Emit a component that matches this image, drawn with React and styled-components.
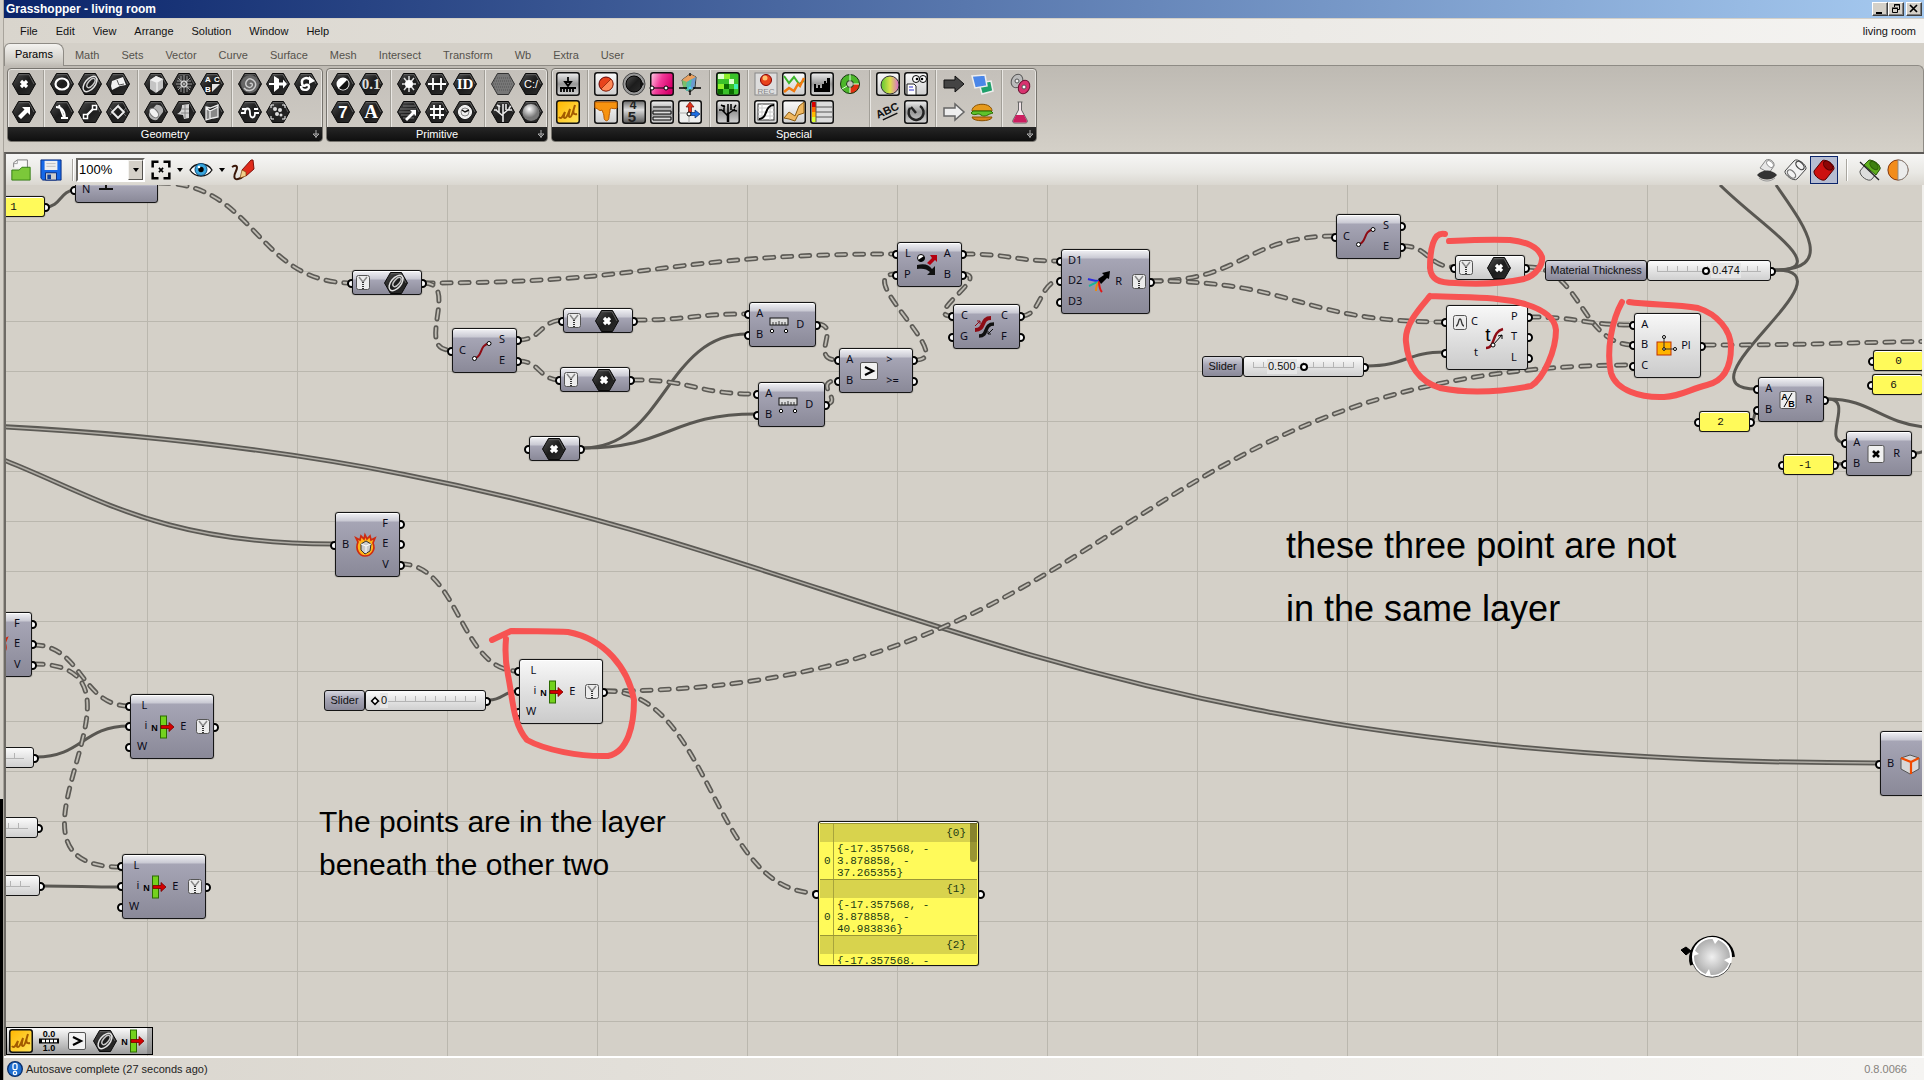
import React from "react";
import styled, { createGlobalStyle, css } from "styled-components";

const UI = '"Liberation Sans", Arial, sans-serif';
const MONO = '"Liberation Mono", "Courier New", monospace';
const ORIGIN = { x: 6, y: 185 };

const GlobalStyle = createGlobalStyle`
  *, *::before, *::after { box-sizing: border-box; }
  body { margin: 0; background: #d4d0c8; font: 11px/14px ${UI}; color: #111; }
  button { font: inherit; color: inherit; background: none; border: 0; padding: 0; margin: 0; }
`;

/* ---------- window frame ---------- */

const Screen = styled.div`
  display: flex;
  height: 100vh;
  overflow: hidden;
`;
const Backdrop = styled.div`
  flex: none;
  width: 4px;
  background: linear-gradient(#d4d0c8 0 74%, #000 74%);
  border-right: 1px solid #a8a49c;
`;
const Window = styled.div`
  flex: 1;
  min-width: 0;
  display: flex;
  flex-direction: column;
`;
const TitleBar = styled.header`
  height: 18px;
  display: flex;
  align-items: center;
  padding: 0 2px;
  background: linear-gradient(90deg, #0a246a, #a6caf0);
  h1 { flex: 1; margin: 0; font-size: 12px; line-height: 18px; font-weight: bold; color: #fff; }
`;
const CaptionButton = styled.button`
  width: 16px;
  height: 14px;
  margin-left: ${(p) => (p.$apart ? 2 : 0)}px;
  background: #d4d0c8;
  border: 1px solid;
  border-color: #fff #404040 #404040 #fff;
  box-shadow: inset -1px -1px #808080;
  svg { display: block; width: 14px; height: 12px; }
`;
const MenuBar = styled.nav`
  height: 25px;
  display: flex;
  align-items: center;
  padding: 0 8px 0 7px;
  background: linear-gradient(90deg, #d9d5cd, #f5f4f2);
  border-top: 1px solid #d4d0c8;
`;
const MenuItem = styled.button`
  padding: 0 9px;
  font-size: 11px;
`;
const DocName = styled.span`
  margin-left: auto;
`;
const Tabs = styled.div`
  height: 22px;
  display: flex;
  align-items: stretch;
  background: #d4d0c8;
`;
const Tab = styled.button`
  padding: 2px 11px 0;
  color: #55524c;
  ${(p) =>
    p.$active &&
    css`
      color: #000;
      padding: 0 10px 2px;
      margin-bottom: -1px;
      border: 1px solid #8e8b85;
      border-bottom: 0;
      border-radius: 6px 8px 0 0;
      background: linear-gradient(#f4f3f0, #cfccc5 80%, #bfbbb4);
      z-index: 1;
    `}
`;
const Ribbon = styled.div`
  height: 87px;
  display: flex;
  align-items: flex-start;
  gap: 3px;
  padding: 2px 3px;
  border-top: 1px solid #8e8b85;
  border-right: 1px solid #8e8b85;
  border-radius: 0 6px 0 0;
  background: linear-gradient(#bebab3, #d4d0c8);
`;
const Group = styled.section`
  border: 1px solid #77746e;
  border-radius: 4px;
  background: linear-gradient(#c4c0ba, #cfcbc4);
  box-shadow: inset 0 0 0 1px #e6e4e0;
  overflow: hidden;
`;
const GroupBody = styled.div`
  height: 58px;
  display: flex;
  padding: 1px 2px 0;
`;
const GroupTitle = styled.button`
  position: relative;
  display: block;
  width: 100%;
  height: 14px;
  line-height: 13px;
  color: #fff;
  text-align: center;
  background: linear-gradient(#262626, #0f0f0f);
  svg { position: absolute; right: 2px; top: 3px; }
`;
const Cells = styled.div`
  display: grid;
  grid-auto-flow: column;
  grid-template-rows: 28px 28px;
  grid-auto-columns: 28px;
  & + & {
    margin-left: 5px;
    padding-left: 4px;
    border-left: 1px solid #a29f98;
    box-shadow: inset 1px 0 #e9e7e3;
  }
`;
const ToolButton = styled.button`
  display: grid;
  place-items: center;
`;
const Svg = styled.svg`
  display: block;
  flex: none;
  overflow: visible;
`;

const CanvasBar = styled.div`
  height: 33px;
  display: flex;
  align-items: center;
  padding: 0 12px 0 3px;
  border-top: 2px solid #5c5a57;
  border-left: 2px solid #6e6b66;
  background: linear-gradient(#f6f6f5, #e9e8e4 60%, #dad7d0);
`;
const BarButton = styled.button`
  display: grid;
  place-items: center;
  width: ${(p) => p.$w || 28}px;
  height: 28px;
  border: 1px solid ${(p) => (p.$on ? "#0a246a" : "transparent")};
  background: ${(p) => (p.$on ? "#b6bdd2" : "none")};
`;
const BarRule = styled.span`
  width: 2px;
  height: 22px;
  margin: 0 ${(p) => p.$m}px;
  border-left: 1px solid #a9a69f;
  background: #fff;
`;
const ZoomBox = styled.label`
  display: flex;
  height: 24px;
  width: 69px;
  border: 2px solid;
  border-color: #6a6864 #fff #fff #6a6864;
  background: #fff;
`;
const ZoomSelect = styled.select`
  flex: 1;
  min-width: 0;
  appearance: none;
  border: 0;
  padding: 0 0 0 1px;
  background: #fff;
  font: 13px/20px ${UI};
  color: #000;
`;
const ZoomArrow = styled.span`
  width: 15px;
  display: grid;
  place-items: center;
  background: #d4d0c8;
  border: 1px solid;
  border-color: #f4f3f0 #55534f #55534f #f4f3f0;
`;
const Push = styled.span`
  flex: 1;
`;
const StatusBar = styled.footer`
  height: 24px;
  display: flex;
  align-items: center;
  gap: 3px;
  padding: 0 17px 0 3px;
  border-top: 2px solid #fff;
  background: linear-gradient(90deg, #d9d5cd, #f5f4f2);
  color: #222;
`;
const Version = styled.span`
  margin-left: auto;
  color: #85827d;
`;

/* ---------- canvas ---------- */

const Canvas = styled.main`
  position: relative;
  flex: 1;
  min-height: 0;
  overflow: hidden;
  border-left: 2px solid #6e6b66;
  border-right: 2px solid #f0efec;
  background-color: #d4d0c8;
  background-image: linear-gradient(90deg, #bab7ae 1px, transparent 1px),
    linear-gradient(#bab7ae 1px, transparent 1px);
  background-size: 150px 50px;
  background-position: 141px 36px;
`;
const Sheet = styled.svg`
  position: absolute;
  inset: 0;
  width: 100%;
  height: 100%;
  pointer-events: none;
`;
const Placed = styled.div`
  position: absolute;
  left: ${(p) => p.$x - ORIGIN.x}px;
  top: ${(p) => p.$y - ORIGIN.y}px;
  width: ${(p) => p.$w}px;
  height: ${(p) => p.$h}px;
  isolation: isolate;
`;
const skins = {
  grey: "linear-gradient(#f2f2f5 0, #c9c9d3 8px, #a6a5b5 9px, #8a8998 100%)",
  light: "linear-gradient(#f8f8f8, #dedede 55%, #cbcbcb)",
  yellow: "#fffa5a",
};
const Body = styled.div`
  height: 100%;
  display: flex;
  align-items: stretch;
  border: 1px solid #151515;
  border-radius: 3px;
  background: ${(p) => skins[p.$skin]};
  box-shadow: inset 0 1px #fff, 0 0 1px #333;
`;
const Ports = styled.div`
  display: flex;
  flex-direction: column;
  padding: 1px 0;
  ${(p) => p.$grow && "flex: 1;"}
`;
const Port = styled.div`
  position: relative;
  flex: 1;
  display: flex;
  align-items: center;
  gap: 4px;
  justify-content: ${(p) => (p.$side === "in" ? "flex-end" : "flex-start")};
  padding: ${(p) => (p.$side === "in" ? "0 0 0 6px" : "0")};
  white-space: nowrap;
`;
const PortName = styled.span`
  padding-bottom: 2px;
  font: 11px/16px "Noto Sans", "Open Sans", sans-serif;
  color: #0c0c1a;
`;
const Grip = styled.i`
  position: absolute;
  z-index: -1;
  top: 50%;
  margin-top: -4px;
  ${(p) => (p.$side === "in" ? "left: -6px;" : "right: -6px;")}
  width: 9px;
  height: 9px;
  border: 2px solid #000;
  border-radius: 50%;
  background: #fff;
`;
const IconSlot = styled.div`
  display: grid;
  place-items: center;
  width: 24px;
  margin: 0 5px 0 4px;
`;
const ZipSlot = styled.div`
  display: grid;
  place-items: center;
  width: 14px;
  margin-left: ${(p) => (p.$end ? "auto" : 0)};
  margin-right: ${(p) => (p.$end ? 3 : 0)}px;
`;
const ParamRow = styled.div`
  position: relative;
  flex: 1;
  display: flex;
  align-items: center;
  justify-content: space-between;
  padding: 0 13px 0 3px;
`;
const Hexed = styled.span`
  margin-left: auto;
`;
const SmallPanel = styled.div`
  position: relative;
  flex: 1;
  display: flex;
  align-items: center;
  justify-content: center;
  padding-right: ${(p) => p.$shift || 0}px;
  font: 11px/14px ${MONO};
`;
const SliderTag = styled.label`
  flex: none;
  width: ${(p) => p.$w}px;
  height: 100%;
  border: 1px solid #151515;
  border-radius: 3px;
  text-align: center;
  line-height: 18px;
  background: linear-gradient(#d6d6de, #a6a5b5 8px, #8a8998);
`;
const SliderBody = styled.div`
  position: relative;
  flex: 1;
  height: 100%;
  padding: 0 5px;
  border: 1px solid #151515;
  border-radius: 3px;
  background: linear-gradient(#fbfbfb, #e4e4e4 50%, #d0d0d0);
`;
const SliderRow = styled.div`
  height: 100%;
  display: flex;
`;
const Range = styled.input`
  appearance: none;
  display: block;
  width: 100%;
  height: 19px;
  margin: 0;
  background:
    linear-gradient(#b4b4b4, #b4b4b4) 4px 10px / calc(100% - 8px) 1px no-repeat,
    repeating-linear-gradient(90deg, #b4b4b4 0 1px, transparent 1px 10px) 4px 5px / calc(100% - 8px) 5px no-repeat;
  &::-webkit-slider-thumb {
    appearance: none;
    width: 8px;
    height: 8px;
    margin-top: 1px;
    border: 2px solid #000;
    border-radius: ${(p) => (p.$diamond ? 0 : "50%")};
    background: #fff;
    transform: ${(p) => (p.$diamond ? "rotate(45deg) scale(0.8)" : "none")};
  }
`;
const Value = styled.output`
  position: absolute;
  top: 2px;
  ${(p) => (p.$before ? "right: calc(50% + 7px);" : "")}
  font-size: 11px;
  line-height: 15px;
  padding: 0 1px;
  background: #e6e6e6;
`;
const Note = styled.p`
  position: absolute;
  left: ${(p) => p.$x - ORIGIN.x}px;
  top: ${(p) => p.$y - ORIGIN.y}px;
  margin: 0;
  font: ${(p) => p.$size}px/${(p) => p.$line}px ${UI};
  color: #000;
  white-space: pre;
`;
const Readout = styled.div`
  position: relative;
  flex: 1;
  min-width: 0;
  margin: 1px;
  overflow: hidden;
  font: 11px/12px ${MONO};
  color: #1c3a14;
`;
const BranchHead = styled.div`
  height: 19px;
  padding-right: 11px;
  line-height: 18px;
  text-align: right;
  background: linear-gradient(90deg, transparent 13px, #a8a43c 13px 14px, transparent 14px), #d8d34d;
  border-top: 1px solid #9a9636;
`;
const BranchItem = styled.div`
  display: flex;
  height: 37px;
  align-items: center;
`;
const Index = styled.span`
  width: 14px;
  height: 100%;
  line-height: 38px;
  padding-left: 4px;
  border-right: 1px solid #a8a43c;
`;
const Coords = styled.span`
  padding: 1px 0 0 3px;
  white-space: pre;
`;
const ScrollThumb = styled.i`
  position: absolute;
  right: 0;
  top: 0;
  width: 7px;
  height: 39px;
  border-radius: 0 0 4px 4px;
  background: rgba(70, 66, 20, 0.55);
`;
const Recent = styled.div`
  position: absolute;
  left: 0;
  bottom: 1px;
  display: flex;
  height: 28px;
  padding-right: 5px;
  border: 1px solid #000;
  background: linear-gradient(90deg, transparent 140px, #77777788 140px), linear-gradient(#fbfbfb, #9d9d9d);
`;
const RecentButton = styled.button`
  width: 28px;
  display: grid;
  place-items: center;
`;

/* ---------- icons ---------- */

const Ico = ({ children, s = 24 }) => (
  <Svg width={s} height={s} viewBox="0 0 24 24" fill="none" aria-hidden="true">
    {children}
  </Svg>
);
const Hex = ({ children }) => (
  <Ico>
    <path d="M6.500 1.500H17.500L23.500 12L17.500 22.500H6.500L.5 12Z" fill="url(#hexFill)" stroke="#0a0a0a" />
    <path d="M7 2.700H17L22 12" stroke="#777" strokeWidth=".7" />
    {children}
  </Ico>
);
const Tile = ({ fill = "url(#tileFill)", children }) => (
  <Ico>
    <rect x=".75" y=".75" width="22.500" height="22.500" rx="2.500" fill={fill} stroke="#111" strokeWidth="1.500" />
    {children}
  </Ico>
);
const W = { stroke: "#fff", strokeWidth: 1.8 };
const T = (p) => <text textAnchor="middle" fill="#fff" fontFamily={UI} fontWeight="bold" {...p} />;

const HexPoint = () => <Hex><path d="M9 9l6 6M15 9l-6 6" stroke="#fff" strokeWidth="3.200" /></Hex>;
const HexCurve = () => (
  <Hex>
    <ellipse cx="12" cy="12" rx="9" ry="5" transform="rotate(-50 12 12)" stroke="#e2e2e2" strokeWidth="1.500" />
    <ellipse cx="13" cy="11" rx="5.500" ry="2.600" transform="rotate(-50 13 11)" stroke="#c4c4c4" strokeWidth="1.500" />
  </Hex>
);
const Scribble = () => (
  <Tile fill="url(#gold)">
    <path d="M3 17c2 3 4-1 6-5-1 3-2 6 0 6s3-4 5-9c-1 4-2 8 0 8s3-6 5-12c-2 6-3 10 2 9" stroke="#a35b00" strokeWidth="2" />
  </Tile>
);
const Item = () => (
  <Ico>
    <rect x="9.500" y="1" width="6" height="22" fill="#74d21d" stroke="#2b6b00" />
    <path d="M10 10.500h8v-3l5 4.500-5 4.500v-3h-8z" fill="#d40000" stroke="#700" strokeWidth=".8" />
    <text x="3.500" y="15.500" textAnchor="middle" fontSize="9" fontWeight="bold" fontFamily={UI} fill="#000">N</text>
  </Ico>
);
const Greater = () => (
  <Ico>
    <rect x="3.500" y="3.500" width="17" height="17" rx="1.500" fill="#f2f2f2" stroke="#555" />
    <path d="M8 8l8 4-8 4" stroke="#000" strokeWidth="2.200" />
  </Ico>
);
const Distance = () => (
  <Ico>
    <rect x="3" y="5" width="18" height="7" fill="#ddd" stroke="#111" />
    <path d="M6 12V9M9 12V9M12 12V8M15 12V9M18 12V9" stroke="#111" strokeWidth=".8" />
    <path d="M5 13v4M19 13v4" stroke="#777" strokeWidth=".8" />
    <circle cx="5" cy="18" r="1.700" fill="#fff" stroke="#000" /><circle cx="19" cy="18" r="1.700" fill="#fff" stroke="#000" />
  </Ico>
);
const EndPoints = () => (
  <Ico>
    <path d="M4.500 19.500C13 18 9 6 19 4.500" stroke="#8e0b14" strokeWidth="2" />
    <circle cx="4.500" cy="19.500" r="2" fill="#fff" stroke="#000" /><circle cx="19" cy="4.500" r="2" fill="#fff" stroke="#000" />
  </Ico>
);
const Dispatch = () => (
  <Ico>
    <path d="M12 10l5-5-2-3h7v7l-2-2-5 5z" fill="#b40010" />
    <path d="M2 12c8-2 12 0 15 4l3-3v9h-8l3-3c-3-3-7-4-13-3z" fill="#111" />
    <circle cx="6" cy="5" r="3.500" fill="#fff" stroke="#000" /><path d="M3 7a3.500 3.500 0 0 0 6-4z" fill="#000" />
  </Ico>
);
const Flip = () => (
  <Ico>
    <path d="M3 15C14 15 8 3 19 3" stroke="#8e0b14" strokeWidth="4" />
    <path d="M7 21C17 21 11 9 22 9" stroke="#111" strokeWidth="3.500" />
    <path d="M3 11l5-5M5 6h3v3" stroke="#8e0b14" /><path d="M21 14l-5 5M16 16v3h3" stroke="#111" />
  </Ico>
);
const Merge = () => (
  <Ico>
    <path d="M14 11C9 11 6 10 2 9" stroke="#2a2ae0" strokeWidth="2" /><path d="M13 12C9 12 6 15 3 16" stroke="#18b59b" strokeWidth="2" />
    <path d="M13 12c-2 2-3 5-3 9" stroke="#e88a10" strokeWidth="2" /><path d="M13 11c0 5 1 9 3 11" stroke="#e01818" strokeWidth="2" />
    <path d="M12 9l6-4-2-2 8-2-1 8-2-1-6 6z" fill="#000" />
  </Ico>
);
const Evaluate = () => (
  <Ico>
    <path d="M4 22C14 22 9 6 21 3" stroke="#8e0b14" strokeWidth="2.500" />
    <path d="M11 19l9-10M16 10l4-1v4" stroke="#000" /><circle cx="11" cy="19" r="2" fill="#fff" stroke="#000" />
    <text x="6" y="15" textAnchor="middle" fontSize="19" fontFamily={UI} fill="#000">t</text>
  </Ico>
);
const Plane3 = () => (
  <Ico>
    <rect x="5" y="8" width="14" height="13" fill="#ffb400" stroke="#c03000" />
    <path d="M12 15V3M12 15h11" stroke="#333" />
    <g fill="#fff" stroke="#000"><circle cx="12" cy="15" r="1.300" /><circle cx="12" cy="3" r="1.500" /><circle cx="23" cy="15" r="1.500" /></g>
  </Ico>
);
const Divide = () => (
  <Ico>
    <rect x="4" y="3.500" width="16" height="17" rx="1.500" fill="#f0f0f0" stroke="#555" />
    <path d="M16 5L8 19" stroke="#000" />
    <text x="8.500" y="12" textAnchor="middle" fontSize="9" fontWeight="bold" fontFamily={UI} fill="#000">A</text>
    <text x="15.500" y="19" textAnchor="middle" fontSize="9" fontWeight="bold" fontFamily={UI} fill="#000">B</text>
  </Ico>
);
const Times = () => (
  <Ico>
    <rect x="4" y="3.500" width="16" height="17" rx="1.500" fill="#f0f0f0" stroke="#555" />
    <path d="M9 9l6 6M15 9l-6 6" stroke="#000" strokeWidth="2.500" />
  </Ico>
);
const Fire = () => (
  <Ico>
    <path d="M5 9L3 5l4 2 1-4 3 3 1-4 2 4 3-3 1 4 4-2-2 5c3 7-2 13-8 13S2 16 5 9z" fill="#ffb51a" stroke="#cf2a10" strokeWidth="1.700" />
    <path d="M8 11l5-3 5 3-1 7-5 3-4-4z" fill="#ccc" stroke="#333" /><path d="M8 11l5 2v7M13 13l5-2" stroke="#fff" />
  </Ico>
);
const BoxIcon = () => (
  <Ico>
    <path d="M3 6l9-3 9 3v11l-9 5-9-5z" fill="#d8d8d8" stroke="#555" /><path d="M3 6l10 4 8-4M13 10v12" stroke="#f04a00" strokeWidth="2.200" />
  </Ico>
);
const Segment = () => (
  <Ico><path d="M5 11h14M12 11V1" stroke="#111" strokeWidth="2" /></Ico>
);
const Zip = () => (
  <Svg width="14" height="15" viewBox="0 0 14 15" fill="none">
    <rect x=".5" y=".5" width="13" height="14" rx="2" fill="#ececec" stroke="#555" />
    <path d="M3 2l4 5 4-5" stroke="#888" strokeWidth="1.500" /><path d="M7 7v7" stroke="#333" strokeWidth="2" strokeDasharray="1 1" />
  </Svg>
);
const Caret = () => (
  <Svg width="14" height="15" viewBox="0 0 14 15" fill="none">
    <rect x=".5" y=".5" width="13" height="14" rx="2" fill="#ececec" stroke="#555" />
    <path d="M3 11c3 0 2-7 4-7s1 7 4 7" stroke="#333" strokeWidth="1.300" />
  </Svg>
);
const Drop = () => <Svg width="6" height="4" viewBox="0 0 6 4"><path d="M0 0h6L3 4z" fill="#000" /></Svg>;

const geometry = [
  [[<HexPoint />, <Hex><path d="M6 16l6.500-6.500L10 7h8v8l-2.500-2.500L9 19z" fill="#fff" /></Hex>]],
  [
    [<Hex><ellipse cx="12" cy="12" rx="6.500" ry="5.500" {...W} strokeWidth="2.200" /></Hex>, <Hex><path d="M6 7c6 0 9 4 9 11M14 18L9 5M11 18h7" {...W} /></Hex>],
    [<HexCurve />, <Hex><path d="M8 16L16 8" {...W} strokeWidth="2.200" /><rect x="5.500" y="14.500" width="4" height="4" fill="#111" stroke="#fff" strokeWidth="1.500" /><rect x="14.500" y="5.500" width="4" height="4" fill="#111" stroke="#fff" strokeWidth="1.500" /></Hex>],
    [<Hex><path d="M6 9l11-4 3 8-6 1-8 4-1-4z" fill="#f2f2f2" /><path d="M11 8l2 5 5-1" stroke="#555" /></Hex>, <Hex><path d="M4 8l9 10M11 6l9 10M13 4L4 15M20 8l-9 11" stroke="#777" /><path d="M12 6l6 6-6 6-6-6z" stroke="#eee" strokeWidth="1.800" /></Hex>],
  ],
  [
    [<Hex><path d="M6 8l6-4 7 3v9l-7 5-6-4z" fill="#c4c4c4" /><path d="M6 8l6-4 7 3-6 4z" fill="#f0f0f0" /><path d="M13 11v9" stroke="#fff" /></Hex>, <Hex><path d="M5 13l7-8c4-1 8 3 7 7l-6 8c-5 1-9-3-8-7z" fill="#b4b4b4" /><ellipse cx="10" cy="13" rx="3.500" ry="5.500" fill="#f2f2f2" stroke="#777" transform="rotate(-42 10 13)" /></Hex>],
    [<Hex><path d="M12 3v18M4 12h16M6 6l12 12M18 6L6 18M9 4v16M15 4v16M5 9h14M5 15h14" stroke="#aaa" strokeWidth=".9" /><circle cx="12" cy="12" r="3" stroke="#ddd" /></Hex>, <Hex><path d="M10 5l7-1v14l-5 1-1-4-6-1c4-2 5-5 5-9z" fill="#d5d5d5" /><path d="M10 9h7M9 13h8M13 5v13" stroke="#888" /></Hex>],
    [<Hex><T x="8" y="10" fontSize="8">A</T><T x="17" y="10" fontSize="8">C</T><T x="8" y="20" fontSize="8">B</T><path d="M12 12h8l-8 8z" fill="#e4e4e4" /></Hex>, <Hex><path d="M6 7l4 1 8-3v12l-5 1-7 2zM6 8l4 3 8-4M10 10v8" fill="#888" stroke="#eee" strokeWidth="1.300" /></Hex>],
  ],
  [
    [<Hex><circle cx="12" cy="12" r="9" fill="#666" /><path d="M12 12c1-2 3 0 2 2s-5 2-6-1 2-7 5-6 6 4 4 8-8 5-11 1" stroke="#ccc" strokeWidth="1.500" /></Hex>, <Hex><path d="M3 13h4c0-6 5-6 5 0s5 6 5 0h4M4 9h4M16 9h4" {...W} strokeWidth="1.800" /></Hex>],
    [<Hex><path d="M8 4l5 3v9l-5 4zM12 10.500h5v-3l4 4.500-4 4.500v-3h-5zM3 11h5v2H3z" fill="#fff" /></Hex>, <Hex><path d="M5 8V5h3M16 5h3v3M19 16v3h-3M8 19H5v-3" stroke="#fff" /><g fill="#ddd"><circle cx="9" cy="9" r="2" /><circle cx="14" cy="10" r="2" /><circle cx="11" cy="14" r="2" /><circle cx="15" cy="15" r="1.500" /></g></Hex>],
    [<Hex><path d="M17 8c-5-4-10-1-9 3 0 4 4 3 5 1M7 14c0 5 8 5 8 1 0-3-4-3-4 0" {...W} strokeWidth="2.400" /><path d="M15 4l6 5-6 3z" fill="#fff" /></Hex>, null],
  ],
];
const primitive = [
  [
    [<Hex><circle cx="12" cy="12" r="6.500" fill="#fff" /><path d="M16 8a5.600 5.600 0 0 1-8 8z" fill="#111" /></Hex>, <Hex><T x="12" y="18" fontSize="17">7</T></Hex>],
    [<Hex><T x="12" y="17" fontSize="15" fill="#ddd" fontFamily="Liberation Serif">0.1</T></Hex>, <Hex><T x="12" y="18" fontSize="19" fontFamily="Liberation Serif">A</T></Hex>],
  ],
  [
    [<Hex><path d="M12 4v16M5 12h14M7 6l10 12M17 6L7 18" stroke="#ddd" strokeWidth="1.500" /><circle cx="12" cy="12" r="4" fill="#fff" /></Hex>, <Hex><path d="M3 9h16M2 12h17M4 15h15M6 18h11M6 6h12" stroke="#777" /><path d="M8 19l7-7-2-2h6v6l-2-2-7 7z" fill="#fff" /></Hex>],
    [<Hex><path d="M3 12h18" {...W} strokeWidth="2.200" /><path d="M8 6v12M16 6v12" {...W} /></Hex>, <Hex><path d="M5 9h14M5 15h14M9 5v14M15 5v14" {...W} /></Hex>],
    [<Hex><T x="12" y="17" fontSize="15" fontFamily="Liberation Serif">ID</T></Hex>, <Hex><circle cx="12" cy="12" r="6.500" fill="#eee" stroke="#fff" /><circle cx="12" cy="12" r="4" stroke="#888" /><path d="M9 10l3 2 4-2" stroke="#111" strokeWidth="1.500" /></Hex>],
  ],
  [
    [<Ico><path d="M6.500 1.500H17.500L23.500 12L17.500 22.500H6.500L.5 12Z" fill="#777" stroke="#333" /><path d="M4 6h16M3 9h18M2 12h20M3 15h18M4 18h16" stroke="#555" strokeDasharray="1 1" /></Ico>, <Hex><path d="M12 22V12M12 16L5 10M12 14l7-6M8 12V5M6 10H3M16 10h5M12 12V4M15 10V4M9 7L6 5M18 8l2-2" stroke="#e8e8e8" strokeWidth="1.600" /></Hex>],
    [<Hex><T x="12" y="16" fontSize="11" fontWeight="normal">C:/</T></Hex>, <Hex><circle cx="12" cy="12.500" r="8.500" fill="url(#ball)" /></Hex>],
  ],
];
const special = [
  [[<Tile><path d="M12 5v6M9 10h6l-3 4zM4 16h16M5 17v3M8 17v3M11 17v3M14 17v3M17 17v3" stroke="#000" strokeWidth="1.800" /></Tile>, <Scribble />]],
  [
    [<Tile fill="url(#paper)"><circle cx="12" cy="12" r="7" fill="#e8431c" stroke="#600" /><path d="M17 7A7 7 0 0 1 7 17z" fill="#ff8a5a" stroke="#801800" strokeWidth=".7" /></Tile>, <Tile fill="url(#paper)"><path d="M1 2h22v6c-3 2-5-1-7 1v1c0 3-1 4-1 7 0 5-5 5-5 0 0-3-1-4-2-7-3 2-4-2-7-2z" fill="#f79310" stroke="#b85a00" /></Tile>],
    [<Ico><circle cx="12" cy="12" r="11" fill="#999" stroke="#444" /><circle cx="12" cy="12" r="8" fill="url(#hexFill)" stroke="#000" /><path d="M18 8l4 4-4 4z" fill="#111" /></Ico>, <Tile fill="url(#drum)"><T x="11" y="9" fontSize="12" fill="#222">4</T><T x="10" y="22" fontSize="15" fill="#222">5</T></Tile>],
    [<Tile fill="url(#pink)"><path d="M1 16h22" stroke="#000" /><circle cx="2" cy="16" r="2" fill="#fff" stroke="#000" /><circle cx="16" cy="16" r="2" fill="#fff" stroke="#000" /></Tile>, <Tile><path d="M3 7h18M3 11h18v3H3zM3 17h18v3H3z" stroke="#000" fill="#ddd" /></Tile>],
    [<Ico><path d="M4 8l8-6 6 3-1 11-5 4-6-4z" fill="#7a8" stroke="#333" /><path d="M4 8l5 2-1 8-3-3z" fill="#7abf6a" /><path d="M4 8l8-6 6 3-9 5z" fill="#e9a060" /><path d="M9 10l9-5-2 11-8 3z" fill="#6a9ad0" /><path d="M9 10l5-3-2 11-4 1z" fill="#4fc0a8" /><path d="M12 15v8M12 1v3M1 16h8M15 16h8" stroke="#000" strokeWidth="1.300" /><circle cx="12" cy="16" r="1.500" fill="#4ad0ff" /></Ico>, <Tile fill="#eee"><path d="M1 13h10v10" stroke="#aaa" /><path d="M10.500 14V7H8l4-5 4 5h-2.500v7z" fill="#e0311c" stroke="#701008" strokeWidth=".7" /><path d="M12 12.500h5V10l5 4-5 4v-2.500h-5z" fill="#1c6be0" stroke="#06286c" strokeWidth=".7" /><circle cx="11" cy="14" r="2" fill="#fff" stroke="#000" /></Tile>],
  ],
  [[<Tile fill="#3ac22a"><path d="M2 2h6v5H2zM13 7h5v5h-5z" fill="#dfffcf" /><path d="M8 2h6v5H8zM2 12h6v5H2z" fill="#8ff02a" /><path d="M8 12h5v5H8zM13 17h5v5h-5zM2 17h5v5H2z" fill="#0b6b00" /><path d="M18 12h4v5h-4z" fill="#3ff0b0" /></Tile>, <Tile><path d="M12 22V12M12 16L6 10M12 14l7-5M8 12V5M6 10H3M16 10l5 1M12 12V4M15 10V4M18 8l2-3M9 7L5 5" stroke="#000" strokeWidth="1.500" /><path d="M12 22v-9" stroke="#000" strokeWidth="2.500" /></Tile>]],
  [
    [<Ico><rect x="1" y="1" width="22" height="22" fill="#ddd" stroke="#888" /><circle cx="12" cy="8" r="5.500" fill="#e8431c" stroke="#800" /><circle cx="11" cy="6" r="2.500" fill="#ffc070" /><T x="12" y="22" fontSize="8" fill="#888" fontWeight="normal">REC</T></Ico>, <Tile fill="url(#paper)"><rect x="4" y="4" width="16" height="16" fill="#fff" stroke="#333" /><path d="M8 4v16M16 4v16M4 8h16M4 12h16M4 16h16" stroke="#ccc" /><path d="M5 19c9 0 5-14 15-14" stroke="#000" strokeWidth="2" /></Tile>],
    [<Tile fill="url(#paper)"><path d="M2 4l5 7 5-6 5 7 5-3" stroke="#3cb52a" strokeWidth="2" /><path d="M2 20l5-4 5 3 4-7 2 2 4-8" stroke="#f07a10" strokeWidth="2.500" /></Tile>, <Tile fill="url(#paper)"><path d="M2 18l5-6 6 4 4-10 5-4v11l-6 2-3 6-6-2z" fill="#f0b860" stroke="#8a5a10" /></Tile>],
    [<Tile><path d="M4 20V12h2v4h2v-3h2v3h2v-4h2V9h2v2h1V6h3v14z" fill="#000" /></Tile>, <Tile fill="#ddd"><path d="M2 2h4v5H2z" fill="#d00" /><path d="M2 7h4v5H2z" fill="#f60" /><path d="M2 12h4v5H2z" fill="#fb0" /><path d="M2 17h4v5H2z" fill="#df3" /><path d="M6 2v20M6 7h16M6 12h16M6 17h16" stroke="#555" /></Tile>],
    [<Ico><circle cx="12" cy="12" r="6.500" stroke="#4cb62a" strokeWidth="6" /><path d="M12 18.500a6.500 6.500 0 0 0 6.500-6.500" stroke="#e03010" strokeWidth="6" /><circle cx="12" cy="12" r="9.500" stroke="#153510" /><circle cx="12" cy="12" r="3.500" stroke="#153510" /><path d="M12 2v7M4 17l5-3M21 12h-6M12 21v-6" stroke="#dfd" /></Ico>, null],
  ],
  [
    [<Tile fill="url(#paper)"><circle cx="14" cy="13" r="9" fill="url(#swatch)" stroke="#333" /></Tile>, <Ico><g transform="rotate(-25 12 12)"><T x="12" y="14" fontSize="11" fill="#111">ABC</T><path d="M4 17h16" stroke="#111" strokeWidth="1.500" /></g></Ico>],
    [<Tile fill="url(#paper)"><circle cx="12" cy="7" r="3.500" fill="#fff" stroke="#000" /><circle cx="19" cy="7" r="3.500" fill="#fff" stroke="#000" /><circle cx="13" cy="7" r="1.300" fill="#000" /><circle cx="18" cy="7" r="1.300" fill="#000" /><path d="M3 12h7l2 2v9H3z" fill="#fff" stroke="#222" /><path d="M5 15h4M5 18h5" stroke="#33c" /></Tile>, <Tile><path d="M6 8a7.500 7.500 0 1 0 10-2M12 13L7 7" stroke="#222" strokeWidth="2.500" /></Tile>],
  ],
  [
    [<Ico><path d="M2 8h11V4l9 8-9 8v-4H2z" fill="#444" stroke="#111" /></Ico>, <Ico><path d="M2 8h11V4l9 8-9 8v-4H2z" fill="#eee" stroke="#666" strokeWidth="1.500" /></Ico>],
    [<Ico><path d="M9 11l12-2 2 10-11 3z" fill="#1fa06a" stroke="#eee" strokeWidth="1.500" /><path d="M2 4l13-1 2 11-12 2z" fill="#4a86e8" stroke="#eee" strokeWidth="1.500" /></Ico>, <Ico><path d="M2 11c0-9 20-9 20 0z" fill="#e59a1d" stroke="#8a5200" /><path d="M1 13c4 4 6-1 10 2s7-1 12-2l-2-2H3z" fill="#5fc32c" stroke="#276b00" /><path d="M2 17h20c0 5-20 5-20 0z" fill="#d9831a" stroke="#8a5200" /></Ico>],
  ],
  [[<Ico><ellipse cx="9" cy="9" rx="5.500" ry="7" transform="rotate(25 9 9)" fill="#bbb" stroke="#555" /><ellipse cx="16" cy="15" rx="5.500" ry="7" transform="rotate(25 16 15)" fill="#d8336f" stroke="#6b0f30" /><circle cx="9" cy="9" r="2" fill="#eee" stroke="#555" /><circle cx="16" cy="15" r="2" fill="#fff" stroke="#555" /></Ico>, <Ico><path d="M9.500 2h5M10.500 2v8L5 20c-1 2 0 3 2 3h10c2 0 3-1 2-3l-5.500-10V2" fill="#f3e6ea" stroke="#666" /><path d="M8 15h8l3 6c0 1-1 1.500-2 1.500H7c-1 0-2-.5-2-1.500z" fill="#cc1f60" /></Ico>]],
];

const Tube = ({ a, b, line }) => (
  <Ico>
    <path d="M2 13L10 3c2-3 13 3 12 8l-8 10c-3 4-13-3-12-8z" fill={a} stroke={line} />
    <ellipse cx="16" cy="7.500" rx="3.500" ry="5.500" transform="rotate(-45 16 7.500)" fill={b} stroke={line} />
  </Ico>
);

/* ---------- canvas parts ---------- */

const Component = ({ x, y, w, h, skin = "grey", ins = [], outs = [], icon, zip, badge }) => (
  <Placed $x={x} $y={y} $w={w} $h={h}>
    <Body $skin={skin}>
      <Ports>
        {ins.map((n, i) => (
          <Port key={n} $side="in">
            <Grip $side="in" />
            {badge && i === 0 && badge}
            <PortName>{n}</PortName>
          </Port>
        ))}
      </Ports>
      <IconSlot>{icon}</IconSlot>
      <Ports $grow>
        {outs.map((n) => (
          <Port key={n} $side="out">
            <PortName>{n}</PortName>
            {zip && <ZipSlot $end><Zip /></ZipSlot>}
            <Grip $side="out" />
          </Port>
        ))}
      </Ports>
    </Body>
  </Placed>
);
const Param = ({ x, y, w = 70, skin = "grey", zip = true, icon = <HexPoint /> }) => (
  <Placed $x={x} $y={y} $w={w} $h={25}>
    <Body $skin={skin}>
      <ParamRow>
        <Grip $side="in" />
        {zip && <ZipSlot><Zip /></ZipSlot>}
        <Hexed>{icon}</Hexed>
        <Grip $side="out" />
      </ParamRow>
    </Body>
  </Placed>
);
const ValuePanel = ({ x, y, w = 51, shift, children }) => (
  <Placed $x={x} $y={y} $w={w} $h={21}>
    <Body $skin="yellow">
      <SmallPanel $shift={shift}>
        <Grip $side="in" />
        {children}
        <Grip $side="out" />
      </SmallPanel>
    </Body>
  </Placed>
);
const ValueSlider = ({ id, x, y, w, tag, tagW, value, text, before, diamond, step = "any" }) => (
  <Placed $x={x} $y={y} $w={w} $h={21}>
    <SliderRow>
      {tag && <SliderTag $w={tagW} htmlFor={id}>{tag}</SliderTag>}
      <SliderBody>
        <Range id={id} type="range" min="0" max="1" step={step} defaultValue={value} $diamond={diamond} aria-label={tag ? undefined : "Slider"} />
        {text && (
          <Value htmlFor={id} $before={before} style={before ? undefined : { left: `calc(${value} * (100% - 18px) + 14px)` }}>
            {text}
          </Value>
        )}
        <Grip $side="out" />
      </SliderBody>
    </SliderRow>
  </Placed>
);

const link = (x1, y1, x2, y2) => {
  const m = (x1 + x2) / 2;
  return `M${x1} ${y1}C${m} ${y1} ${m} ${y2} ${x2} ${y2}`;
};
const treeWires = [
  link(160, 183, 352, 283),
  link(424, 283, 897, 254),
  "M424 283C460 283 415 350 450 350",
  link(519, 340, 563, 320),
  link(519, 361, 560, 380),
  link(636, 320, 747, 314),
  link(633, 380, 756, 394),
  "M818 324C842 326 808 360 838 360",
  "M828 404C842 400 812 382 838 380",
  "M915 360C960 360 850 274 896 274",
  link(964, 254, 1060, 261),
  "M964 274C990 276 922 316 952 316",
  link(1022, 316, 1059, 281),
  link(1152, 281, 1336, 236),
  link(1152, 281, 1445, 322),
  link(1403, 246, 1454, 267),
  link(1528, 267, 1634, 345),
  link(1530, 317, 1634, 325),
  link(606, 691, 1634, 365),
  link(606, 691, 817, 893),
  link(401, 564, 518, 671),
  link(34, 645, 129, 706),
  "M34 664C175 664 -25 867 121 867",
  link(1705, 345, 2000, 341),
];
const listWires = [link(-218, 421, 1878, 763), link(-220, 421, 333, 544)];
const itemWires = [
  link(46, 207, 75, 190),
  link(583, 448, 747, 334),
  link(583, 448, 756, 414),
  link(1367, 366, 1445, 352),
  link(489, 700, 518, 691),
  link(36, 757, 129, 726),
  link(43, 886, 121, 887),
  "M1720 185C1760 225 1835 270 1775 270",
  "M1776 185C1800 220 1840 270 1775 270",
  "M1775 270C1860 270 1670 389 1757 389",
  link(1752, 421, 1757, 409),
  "M1828 399C1855 399 1820 443 1846 443",
  "M1828 399C1870 399 1880 422 1924 427",
  link(1838, 464, 1846, 463),
  link(1916, 453, 1930, 450),
];
const markerLoops = [
  "M1445 234C1433 231 1430 250 1430 268C1431 279 1438 283 1455 283C1485 285 1510 282 1524 279C1537 275 1543 264 1542 257C1538 246 1526 242 1510 240C1490 239 1470 240 1449 241",
  "M1430 296C1420 308 1404 325 1406 342C1408 365 1418 381 1440 388C1470 394 1500 392 1531 386C1544 378 1556 350 1556 330C1555 315 1538 308 1525 304C1495 296 1470 298 1430 296",
  "M1622 302C1612 320 1606 350 1611 373C1616 390 1640 398 1664 397C1682 396 1690 389 1707 385C1728 380 1731 360 1731 347C1731 330 1717 314 1698 308C1675 304 1650 305 1629 302",
  "M492 640L511 631C530 631 550 631 568 632C605 639 628 668 634 700C634 725 628 752 608 756C580 757 545 750 527 740C513 724 513 700 508 675C505 660 505 650 506 639",
];

const Defs = () => (
  <defs>
    <linearGradient id="hexFill" x1="0" y1="0" x2="1" y2="1"><stop offset="0" stopColor="#505050" /><stop offset=".5" stopColor="#1c1c1c" /><stop offset="1" stopColor="#2e2e2e" /></linearGradient>
    <linearGradient id="tileFill" x1="0" y1="0" x2="0" y2="1"><stop offset="0" stopColor="#f2f2f2" /><stop offset=".5" stopColor="#999" /><stop offset="1" stopColor="#d5d5d5" /></linearGradient>
    <linearGradient id="paper" x1="0" y1="0" x2="0" y2="1"><stop offset="0" stopColor="#fafafa" /><stop offset="1" stopColor="#cfcfcf" /></linearGradient>
    <linearGradient id="drum" x1="0" y1="0" x2="0" y2="1"><stop offset="0" stopColor="#666" /><stop offset=".4" stopColor="#ddd" /><stop offset="1" stopColor="#555" /></linearGradient>
    <linearGradient id="pink" x1="0" y1="0" x2="1" y2=".4"><stop offset="0" stopColor="#ffd0e6" /><stop offset=".5" stopColor="#f23a98" /><stop offset="1" stopColor="#d8006c" /></linearGradient>
    <linearGradient id="gold" x1="0" y1="0" x2="1" y2="1"><stop offset="0" stopColor="#ffb600" /><stop offset="1" stopColor="#ffe45a" /></linearGradient>
    <linearGradient id="swatch"><stop offset="0" stopColor="#5cc832" /><stop offset=".5" stopColor="#dbe04a" /><stop offset="1" stopColor="#d86ad0" /></linearGradient>
    <radialGradient id="ball" cx=".4" cy=".3"><stop offset="0" stopColor="#fff" /><stop offset="1" stopColor="#777" /></radialGradient>
    <radialGradient id="dial"><stop offset="0" stopColor="#f0f0f0" /><stop offset="1" stopColor="#aaa" /></radialGradient>
  </defs>
);

const Wires = () => (
  <Sheet>
    <Defs />
    <g transform={`translate(${-ORIGIN.x} ${-ORIGIN.y})`} fill="none">
      {itemWires.map((d) => <path key={d} d={d} stroke="#595752" strokeWidth="3" />)}
      {listWires.map((d) => (
        <g key={d}><path d={d} stroke="#5c5a55" strokeWidth="5" /><path d={d} stroke="#b0ada6" strokeWidth="1.500" /></g>
      ))}
      {treeWires.map((d) => (
        <g key={d} strokeLinecap="round" strokeDasharray="9 9">
          <path d={d} stroke="#5c5a55" strokeWidth="5" />
          <path d={d} stroke="#c0bdb5" strokeWidth="1.800" />
        </g>
      ))}
    </g>
  </Sheet>
);
const Overlay = () => (
  <Sheet>
    <g transform={`translate(${-ORIGIN.x} ${-ORIGIN.y})`} fill="none">
      {markerLoops.map((d) => <path key={d} d={d} stroke="#f75352" strokeWidth="6" strokeLinecap="round" strokeLinejoin="round" />)}
      <path d="M1692 965A21 21 0 1 1 1733 957" stroke="#000" strokeWidth="4" />
      <path d="M1681 950l5-3 5 4-5 4zM1689 951h3" fill="#000" stroke="#000" />
      <circle cx="1712" cy="957" r="19" fill="url(#dial)" stroke="#fff" strokeWidth="2" />
      <path d="M1693 964A20 20 0 0 0 1731 963" stroke="#555" />
      <path d="M1712 938l7 1-4 5zM1694 950l5 4-6 2zM1705 975l4-6 2 7zM1731 957l-7 3 6 4z" fill="#fff" />
    </g>
  </Sheet>
);

const RibbonGroup = ({ title, sets }) => (
  <Group>
    <GroupBody>
      {sets.map((cols, i) => (
        <Cells key={i}>
          {cols.flat().map((icon, j) => (icon ? <ToolButton key={j}>{icon}</ToolButton> : <span key={j} />))}
        </Cells>
      ))}
    </GroupBody>
    <GroupTitle>
      {title}
      <svg width="8" height="8" viewBox="0 0 8 8"><path d="M4 0v8M1 4l3 3 3-3M1 4h6" stroke="#aaa" fill="none" /></svg>
    </GroupTitle>
  </Group>
);

const branches = [
  ["{0}", "{-17.357568, -\n3.878858, -\n37.265355}"],
  ["{1}", "{-17.357568, -\n3.878858, -\n40.983836}"],
  ["{2}", "{-17.357568, -"],
];

export default function App() {
  return (
    <Screen>
      <GlobalStyle />
      <Backdrop />
      <Window>
        <TitleBar>
          <h1>Grasshopper - living room</h1>
          <CaptionButton aria-label="Minimize"><svg viewBox="0 0 14 12"><path d="M3 9h6v2H3z" /></svg></CaptionButton>
          <CaptionButton aria-label="Restore"><svg viewBox="0 0 14 12" fill="none" stroke="#000"><path d="M5.500 4V1.500h5v5H9M5 2h6M3.500 5.500h5v4h-5zM3 5h6" /></svg></CaptionButton>
          <CaptionButton $apart aria-label="Close"><svg viewBox="0 0 14 12"><path d="M3 2l7 7M10 2L3 9" stroke="#000" strokeWidth="1.700" /></svg></CaptionButton>
        </TitleBar>
        <MenuBar>
          {["File", "Edit", "View", "Arrange", "Solution", "Window", "Help"].map((m) => <MenuItem key={m}>{m}</MenuItem>)}
          <DocName>living room</DocName>
        </MenuBar>
        <Tabs>
          {["Params", "Math", "Sets", "Vector", "Curve", "Surface", "Mesh", "Intersect", "Transform", "Wb", "Extra", "User"].map((t, i) => (
            <Tab key={t} $active={i === 0}>{t}</Tab>
          ))}
        </Tabs>
        <Ribbon>
          <RibbonGroup title="Geometry" sets={geometry} />
          <RibbonGroup title="Primitive" sets={primitive} />
          <RibbonGroup title="Special" sets={special} />
        </Ribbon>
        <CanvasBar>
          <BarButton aria-label="Open" $w={22}>
            <Ico s={22}><path d="M4 9V4l4-3h11v9" fill="#f8f8f8" stroke="#777" /><path d="M8 1v4H4" stroke="#999" /><path d="M2 12h8l3-3h9v14H2z" fill="#7cc83a" stroke="#2f7a10" /></Ico>
          </BarButton>
          <BarButton aria-label="Save" $w={39}>
            <Ico s={22}><path d="M1 1h22v22H3l-2-2z" fill="#1668e8" stroke="#06287c" /><path d="M5 2h14v10H5z" fill="#eee" /><path d="M7 5h10M7 8h10" stroke="#bbb" /><path d="M6 15h12v8H6z" fill="#ccc" stroke="#06287c" /><path d="M8 17h4v5H8z" fill="#0d3f9e" /></Ico>
          </BarButton>
          <BarRule $m={2} />
          <ZoomBox>
            <ZoomSelect aria-label="Zoom"><option>100%</option></ZoomSelect>
            <ZoomArrow><Drop /></ZoomArrow>
          </ZoomBox>
          <BarButton aria-label="Zoom extents" $w={32}>
            <Ico s={20}><path d="M2 9V2h7M15 2h7v7M22 15v7h-7M9 22H2v-7" stroke="#000" strokeWidth="3" /><path d="M9.500 9.500l5 5M14.500 9.500l-5 5" stroke="#000" strokeWidth="2" /></Ico>
          </BarButton>
          <Drop />
          <BarButton aria-label="Preview" $w={36}>
            <Ico><path d="M1 12C6 4 18 4 23 12 18 20 6 20 1 12z" fill="#fff" stroke="#111" strokeWidth="1.300" /><circle cx="12" cy="11.500" r="6" fill="#39a8e0" stroke="#0d4c7a" /><circle cx="12" cy="11.500" r="2.700" fill="#000" /><circle cx="10" cy="9" r="1.300" fill="#fff" /></Ico>
          </BarButton>
          <Drop />
          <BarButton aria-label="Sketch" $w={36}>
            <Ico><path d="M1 9c5-3 6 0 4 4s-3 9 2 8 6-4 6-5" stroke="#3a1708" strokeWidth="2" /><path d="M11 12L20 2l2 0 1 9-8 7z" fill="#e02a1a" stroke="#80100a" /><path d="M9 20l2-8 4 2v4z" fill="#f2cf8a" stroke="#80400a" strokeWidth=".7" /></Ico>
          </BarButton>
          <Push />
          <BarButton aria-label="No preview" $w={29}><Ico><path d="M5 10l6-8c4-2 9 2 8 6l-5 7z" fill="#e6e6e6" stroke="#888" /><ellipse cx="15" cy="6" rx="2.500" ry="4" transform="rotate(-45 15 6)" fill="#fff" stroke="#999" /><path d="M2 17c5-6 15-6 20 0-5 6-15 6-20 0z" fill="#333" /><path d="M4 20c5 4 11 4 16 0" stroke="#999" /></Ico></BarButton>
          <BarButton aria-label="Wireframe" $w={29}><Ico><path d="M1 13L10 3c3-4 13 4 12 8l-9 10C10 24 0 17 1 13z" stroke="#444" fill="#f2f2f2" /><ellipse cx="16" cy="7.500" rx="3" ry="5" transform="rotate(-45 16 7.500)" stroke="#444" strokeWidth="1.300" /><ellipse cx="7.500" cy="16" rx="3" ry="5" transform="rotate(-45 7.500 16)" stroke="#777" strokeWidth="1.300" /></Ico></BarButton>
          <BarButton aria-label="Shaded" $on><Tube a="#cc1010" b="#8c0505" line="#500" /></BarButton>
          <BarRule $m={8} />
          <BarButton aria-label="Selected preview"><Ico><path d="M2 13L10 3c2-3 13 3 12 8l-8 10c-3 4-13-3-12-8z" fill="#ddd" stroke="#555" /><path d="M6 7l4-4c2-3 13 3 12 8l-4 6z" fill="#5fae1e" stroke="#2b5c08" /><ellipse cx="16" cy="7.500" rx="3" ry="5" transform="rotate(-45 16 7.500)" fill="#3d8010" stroke="#2b5c08" /><path d="M2 4l19 18" stroke="#222" strokeWidth="1.300" /></Ico></BarButton>
          <BarButton aria-label="Preview quality"><Ico s={22}><circle cx="12" cy="12" r="11" fill="#f28c1c" stroke="#7a2a00" /><path d="M12 1a11 11 0 0 1 0 22z" fill="#ececec" stroke="#888" /></Ico></BarButton>
        </CanvasBar>

        <Canvas>
          <Wires />

          <Component x={75} y={176} w={83} h={27} ins={["N"]} icon={<Segment />} />
          <ValuePanel x={-18} y={196} w={63}>{"1"}</ValuePanel>
          <Param x={352} y={270} icon={<HexCurve />} />
          <Component x={452} y={328} w={65} h={45} ins={["C"]} outs={["S", "E"]} icon={<EndPoints />} />
          <Param x={563} y={308} />
          <Param x={560} y={367} />
          <Param x={529} y={436} w={51} zip={false} />
          <Component x={749} y={302} w={67} h={45} ins={["A", "B"]} outs={["D"]} icon={<Distance />} />
          <Component x={758} y={382} w={67} h={45} ins={["A", "B"]} outs={["D"]} icon={<Distance />} />
          <Component x={839} y={348} w={74} h={45} ins={["A", "B"]} outs={[">", ">="]} icon={<Greater />} />
          <Component x={897} y={242} w={65} h={45} ins={["L", "P"]} outs={["A", "B"]} icon={<Dispatch />} />
          <Component x={953} y={304} w={67} h={45} ins={["C", "G"]} outs={["C", "F"]} icon={<Flip />} />
          <Component x={1061} y={249} w={89} h={65} ins={["D1", "D2", "D3"]} outs={["R"]} zip icon={<Merge />} />
          <Component x={1336} y={214} w={65} h={45} ins={["C"]} outs={["S", "E"]} icon={<EndPoints />} />
          <Param x={1455} y={255} skin="light" />
          <Component x={1446} y={305} w={82} h={65} skin="light" ins={["C", "t"]} outs={["P", "T", "L"]} icon={<Evaluate />} badge={<Caret />} />
          <Component x={1634} y={313} w={67} h={65} skin="light" ins={["A", "B", "C"]} outs={["Pl"]} icon={<Plane3 />} />
          <Component x={1758} y={377} w={66} h={45} ins={["A", "B"]} outs={["R"]} icon={<Divide />} />
          <Component x={1846} y={431} w={66} h={45} ins={["A", "B"]} outs={["R"]} icon={<Times />} />
          <ValuePanel x={1699} y={411} shift={8}>2</ValuePanel>
          <ValuePanel x={1783} y={454} shift={8}>-1</ValuePanel>
          <ValuePanel x={1873} y={350}>0</ValuePanel>
          <ValuePanel x={1872} y={374} shift={8}>6</ValuePanel>

          <Component x={335} y={512} w={65} h={65} ins={["B"]} outs={["F", "E", "V"]} icon={<Fire />} />
          <Component x={-20} y={612} w={52} h={65} outs={["F", "E", "V"]} icon={<Fire />} />
          <Component x={130} y={694} w={84} h={65} ins={["L", "i", "W"]} outs={["E"]} zip icon={<Item />} />
          <Component x={122} y={854} w={84} h={65} ins={["L", "i", "W"]} outs={["E"]} zip icon={<Item />} />
          <Component x={519} y={659} w={84} h={65} skin="light" ins={["L", "i", "W"]} outs={["E"]} zip icon={<Item />} />
          <Component x={1880} y={731} w={65} h={65} ins={["B"]} icon={<BoxIcon />} />

          <ValueSlider id="thickness" x={1545} y={260} w={226} tag="Material Thickness" tagW={102} value={0.474} text="0.474" />
          <ValueSlider id="curveT" x={1202} y={356} w={162} tag="Slider" tagW={41} value={0.5} text="0.500" before />
          <ValueSlider id="index" x={324} y={690} w={162} tag="Slider" tagW={41} value={0} text="0" diamond />
          <ValueSlider id="indexA" x={-66} y={747} w={100} value={0} />
          <ValueSlider id="indexB" x={-62} y={817} w={100} value={0} />
          <ValueSlider id="indexC" x={-60} y={875} w={100} value={0} />

          <Placed $x={818} $y={821} $w={161} $h={145}>
            <Body $skin="yellow">
              <Readout>
                {branches.map(([path, coords], i) => (
                  <div key={path}>
                    <BranchHead>{path}</BranchHead>
                    <BranchItem style={i === 2 ? { alignItems: "flex-start" } : undefined}>
                      <Index>{i === 2 ? "" : "0"}</Index>
                      <Coords>{coords}</Coords>
                    </BranchItem>
                  </div>
                ))}
                <ScrollThumb />
              </Readout>
            </Body>
            <Grip $side="in" />
            <Grip $side="out" />
          </Placed>

          <Note $x={1286} $y={514} $size={36} $line={63}>{"these three point are not\nin the same layer"}</Note>
          <Note $x={319} $y={800} $size={30} $line={43}>{"The points are in the layer\nbeneath the other two"}</Note>

          <Overlay />
          <Recent>
            <RecentButton aria-label="Sketch panel"><Scribble /></RecentButton>
            <RecentButton aria-label="Number slider">
              <Ico><path d="M2 12h20" stroke="#000" strokeWidth="5" /><path d="M5 12h15" stroke="#fff" strokeWidth="2.500" strokeDasharray="3 1" /><T x="12" y="8" fontSize="9" fill="#000">0.0</T><T x="12" y="22" fontSize="9" fill="#000">1.0</T></Ico>
            </RecentButton>
            <RecentButton aria-label="Larger than"><Greater /></RecentButton>
            <RecentButton aria-label="Curve"><HexCurve /></RecentButton>
            <RecentButton aria-label="List item"><Item /></RecentButton>
          </Recent>
        </Canvas>

        <StatusBar>
          <Ico s={16}><circle cx="12" cy="12" r="11" fill="#1f6fd0" stroke="#0a2f6b" strokeWidth="2" /><rect x="9" y="4" width="6" height="9" rx="2" stroke="#fff" strokeWidth="2" /><circle cx="12" cy="18" r="2.500" stroke="#fff" strokeWidth="2" /></Ico>
          <span>Autosave complete (27 seconds ago)</span>
          <Version>0.8.0066</Version>
        </StatusBar>
      </Window>
    </Screen>
  );
}
